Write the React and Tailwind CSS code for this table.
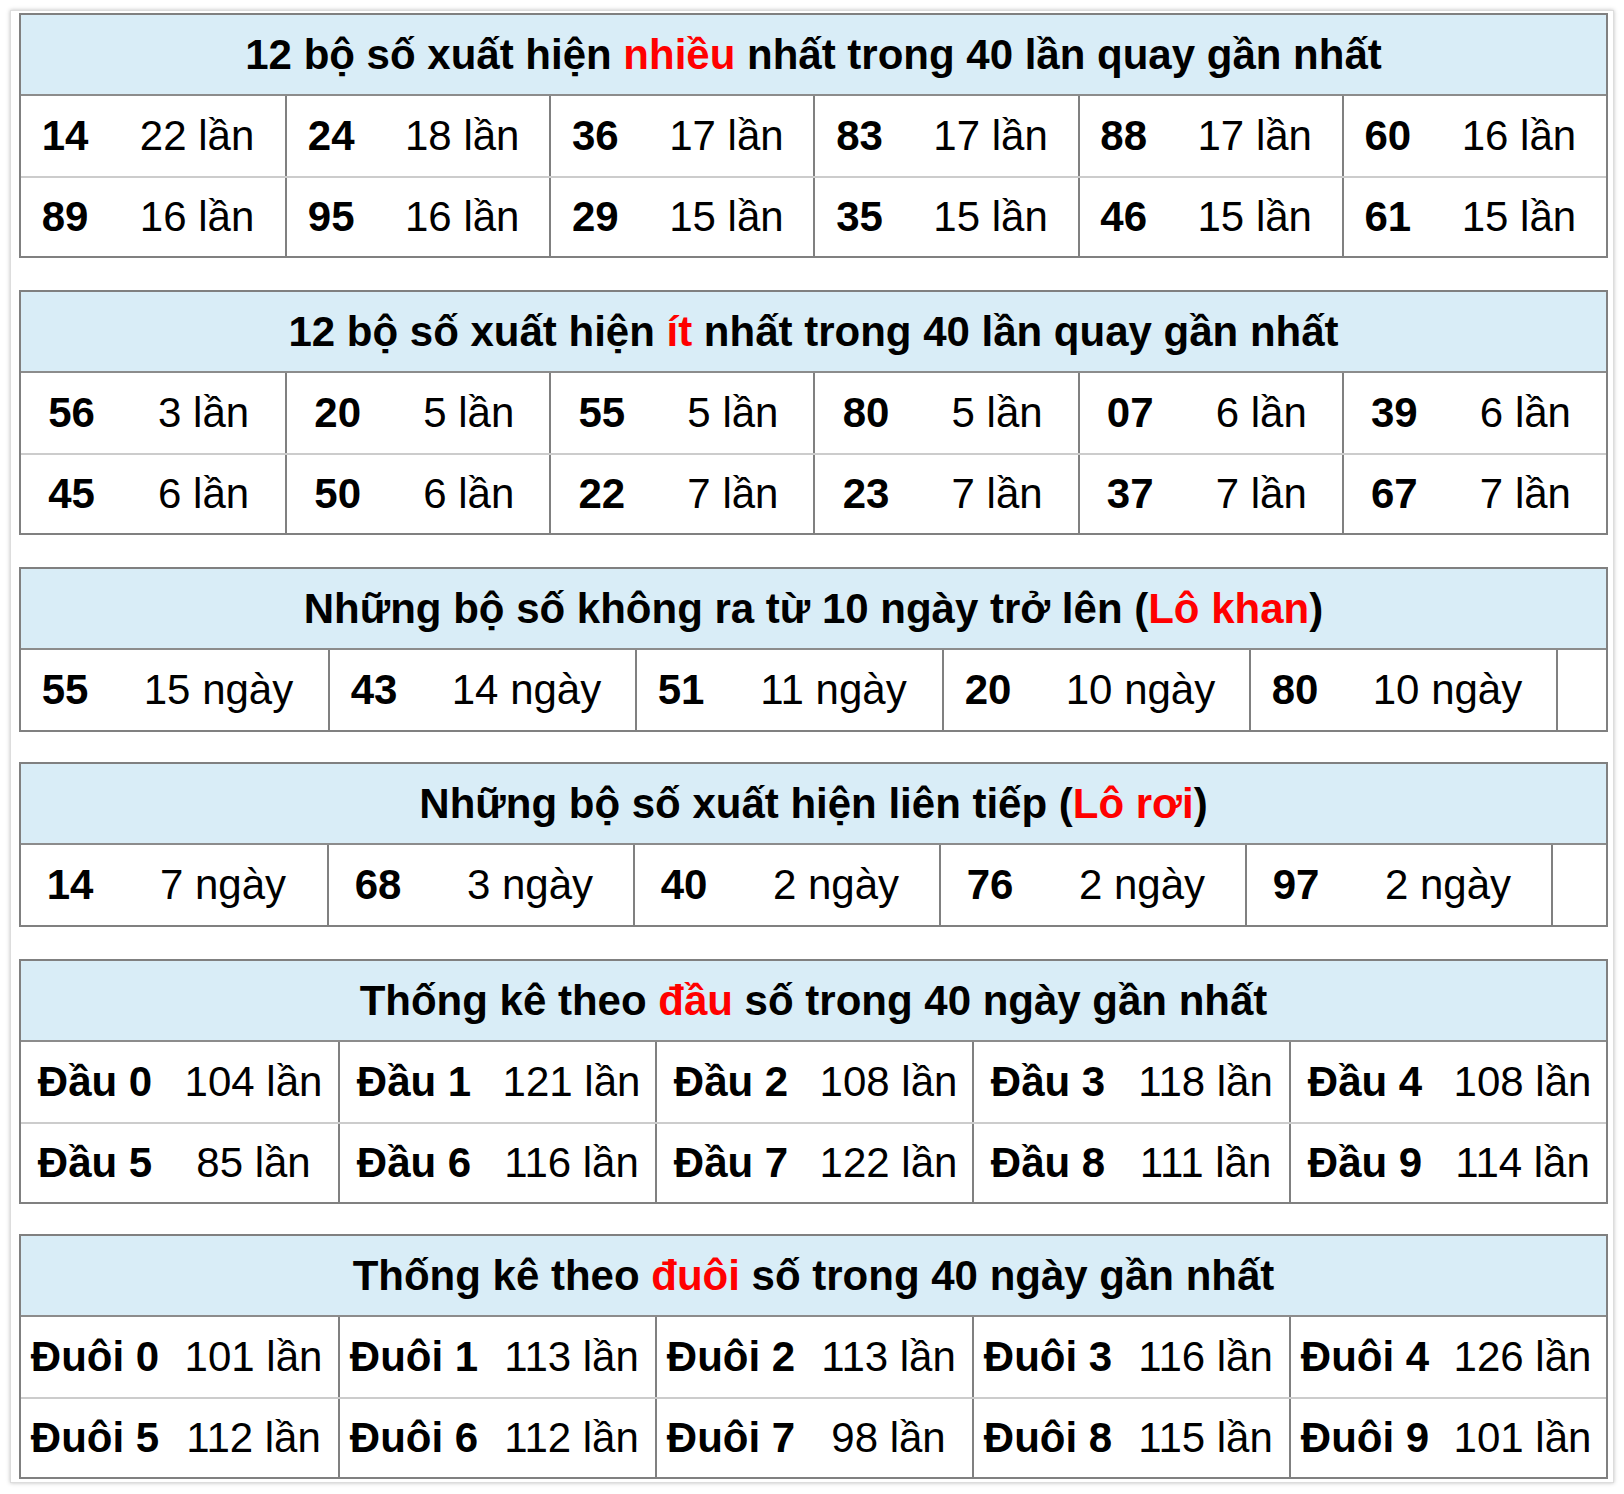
import React from "react";

const R = ({ children }) => <span className="text-[#ff0000]">{children}</span>;

const tables = [
  {
    title: <>12 bộ số xuất hiện <R>nhiều</R> nhất trong 40 lần quay gần nhất</>,
    cols: "grid-cols-6",
    num: "w-[88px]",
    gap: "",
    rows: [
      [["14", "22 lần"], ["24", "18 lần"], ["36", "17 lần"], ["83", "17 lần"], ["88", "17 lần"], ["60", "16 lần"]],
      [["89", "16 lần"], ["95", "16 lần"], ["29", "15 lần"], ["35", "15 lần"], ["46", "15 lần"], ["61", "15 lần"]],
    ],
  },
  {
    title: <>12 bộ số xuất hiện <R>ít</R> nhất trong 40 lần quay gần nhất</>,
    cols: "grid-cols-6",
    num: "w-[101px]",
    gap: "mt-[32px]",
    rows: [
      [["56", "3 lần"], ["20", "5 lần"], ["55", "5 lần"], ["80", "5 lần"], ["07", "6 lần"], ["39", "6 lần"]],
      [["45", "6 lần"], ["50", "6 lần"], ["22", "7 lần"], ["23", "7 lần"], ["37", "7 lần"], ["67", "7 lần"]],
    ],
  },
  {
    title: <>Những bộ số không ra từ 10 ngày trở lên (<R>Lô khan</R>)</>,
    cols: "grid-cols-[repeat(5,307px)_1fr]",
    num: "w-[88px]",
    gap: "mt-[32px]",
    empty: true,
    rows: [[["55", "15 ngày"], ["43", "14 ngày"], ["51", "11 ngày"], ["20", "10 ngày"], ["80", "10 ngày"]]],
  },
  {
    title: <>Những bộ số xuất hiện liên tiếp (<R>Lô rơi</R>)</>,
    cols: "grid-cols-[repeat(5,306px)_1fr]",
    num: "w-[98px]",
    gap: "mt-[30px]",
    empty: true,
    rows: [[["14", "7 ngày"], ["68", "3 ngày"], ["40", "2 ngày"], ["76", "2 ngày"], ["97", "2 ngày"]]],
  },
  {
    title: <>Thống kê theo <R>đầu</R> số trong 40 ngày gần nhất</>,
    cols: "grid-cols-5",
    num: "w-[148px]",
    gap: "mt-[32px]",
    rows: [
      [["Đầu 0", "104 lần"], ["Đầu 1", "121 lần"], ["Đầu 2", "108 lần"], ["Đầu 3", "118 lần"], ["Đầu 4", "108 lần"]],
      [["Đầu 5", "85 lần"], ["Đầu 6", "116 lần"], ["Đầu 7", "122 lần"], ["Đầu 8", "111 lần"], ["Đầu 9", "114 lần"]],
    ],
  },
  {
    title: <>Thống kê theo <R>đuôi</R> số trong 40 ngày gần nhất</>,
    cols: "grid-cols-5",
    num: "w-[148px]",
    gap: "mt-[30px]",
    rows: [
      [["Đuôi 0", "101 lần"], ["Đuôi 1", "113 lần"], ["Đuôi 2", "113 lần"], ["Đuôi 3", "116 lần"], ["Đuôi 4", "126 lần"]],
      [["Đuôi 5", "112 lần"], ["Đuôi 6", "112 lần"], ["Đuôi 7", "98 lần"], ["Đuôi 8", "115 lần"], ["Đuôi 9", "101 lần"]],
    ],
  },
];

function StatTable({ t }) {
  return (
    <div className={`border-2 border-[#808080] ${t.gap}`}>
      <div className="h-[81px] bg-[#d9edf7] border-b-2 border-[#8c8c8c] flex items-center justify-center font-bold">
        <span>{t.title}</span>
      </div>
      {t.rows.map((row, i) => (
        <div key={i} className={`grid ${t.cols} h-[80px] ${i > 0 ? "border-t-2 border-[#cccccc]" : ""}`}>
          {row.map(([n, c], j) => (
            <div key={j} className={`flex items-center ${j > 0 ? "border-l-2 border-[#808080]" : ""}`}>
              <div className={`${t.num} shrink-0 text-center font-bold`}>{n}</div>
              <div className="flex-1 text-center">{c}</div>
            </div>
          ))}
          {t.empty && <div className="border-l-2 border-[#808080]" />}
        </div>
      ))}
    </div>
  );
}

export default function App() {
  return (
    <div className="bg-white min-h-[1494px] pt-[10px] pl-[10px]" style={{ fontFamily: '"Liberation Sans", Arial, Helvetica, sans-serif' }}>
      <div className="w-[1604px] border border-[#dddddd] shadow-[0_0_4px_rgba(0,0,0,0.25)] pt-[2px] pb-[3px] pl-[8px] text-black text-[42px] leading-none">
        <div className="w-[1589px] flex flex-col">
          {tables.map((t, i) => (
            <StatTable key={i} t={t} />
          ))}
        </div>
      </div>
    </div>
  );
}
